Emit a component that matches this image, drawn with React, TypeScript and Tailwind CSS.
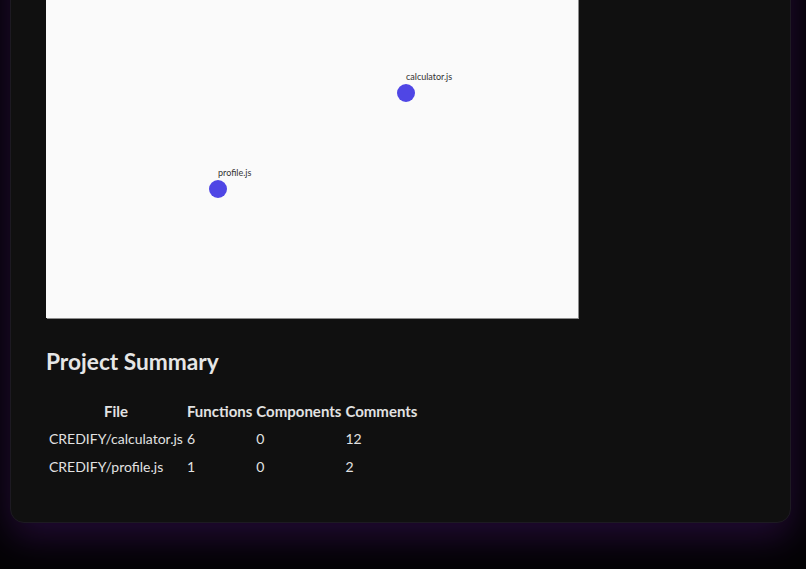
const nodes = [
  { name: 'calculator.js', x: 360, y: 156 },
  { name: 'profile.js', x: 172, y: 252 },
];

const rows = [
  { file: 'CREDIFY/calculator.js', functions: 6, components: 0, comments: 12 },
  { file: 'CREDIFY/profile.js', functions: 1, components: 0, comments: 2 },
];

function FileGraph() {
  return (
    <div className="h-[381px] w-[532px] bg-[#fafafa] shadow-[1px_1px_0_#8c8c8c]">
      <svg width="532" height="381" viewBox="0 0 532 381">
        {nodes.map((n) => (
          <g key={n.name}>
            <circle cx={n.x} cy={n.y} r="9" fill="#4f46e5" />
            <text
              x={n.x}
              y={n.y - 13}
              fontSize="9"
              fill="#333"
              fontFamily="Lato, 'Liberation Sans', sans-serif"
            >
              {n.name}
            </text>
          </g>
        ))}
      </svg>
    </div>
  );
}

export default function App() {
  return (
    <div className="h-[569px] overflow-hidden bg-[#040305] pl-[10px] pr-[15px] font-['Lato','Liberation_Sans',sans-serif]">
      <div className="-mt-[100px] rounded-[14px] border border-[#1d1a22] bg-[#101010] px-[35px] pt-[36px] pb-[40px] shadow-[0_14px_36px_rgba(70,20,110,0.45)]">
        <FileGraph />
        <h2 className="mt-[26px] text-[22.7px] leading-[36px] font-bold text-[#e6e6e6]">
          Project Summary
        </h2>
        <table className="mt-[16px] border-separate border-spacing-[2px] text-[14px] leading-[24px] text-[#e2e2e2]">
          <thead>
            <tr className="text-[15px]">
              <th className="p-px text-center font-bold">File</th>
              <th className="p-px text-center font-bold">Functions</th>
              <th className="p-px text-center font-bold">Components</th>
              <th className="p-px text-center font-bold">Comments</th>
            </tr>
          </thead>
          <tbody>
            {rows.map((r) => (
              <tr key={r.file}>
                <td className="p-px">{r.file}</td>
                <td className="p-px">{r.functions}</td>
                <td className="p-px">{r.components}</td>
                <td className="p-px">{r.comments}</td>
              </tr>
            ))}
          </tbody>
        </table>
      </div>
    </div>
  );
}
